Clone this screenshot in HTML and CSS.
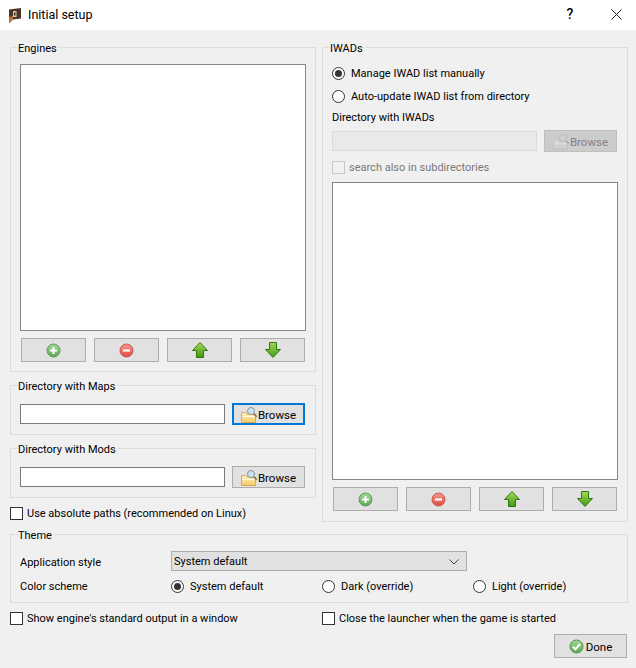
FILE: index.html
```html
<!DOCTYPE html>
<html lang="en">
<head>
    <meta charset="UTF-8">
    <meta name="viewport" content="width=device-width, initial-scale=1.0">
    <title>Initial setup</title>
    <link rel="stylesheet" href="styles.css">
</head>
<body>
    <svg class="icon-defs" width="0" height="0" aria-hidden="true">
        <defs>
            <linearGradient id="greenBall" x1="0" y1="0" x2="0" y2="1">
                <stop offset="0" stop-color="#a6d79c"/>
                <stop offset="1" stop-color="#5aa950"/>
            </linearGradient>
            <linearGradient id="redBall" x1="0" y1="0" x2="0" y2="1">
                <stop offset="0" stop-color="#f59a90"/>
                <stop offset="1" stop-color="#de4a3f"/>
            </linearGradient>
            <linearGradient id="greenArrow" x1="0" y1="0" x2="0" y2="1">
                <stop offset="0" stop-color="#a5d85a"/>
                <stop offset="1" stop-color="#3f9a12"/>
            </linearGradient>
            <linearGradient id="folderFill" x1="0" y1="0" x2="0" y2="1">
                <stop offset="0" stop-color="#fff4c4"/>
                <stop offset="1" stop-color="#f5c964"/>
            </linearGradient>
            <symbol id="icon-add" viewBox="0 0 15 15">
                <circle cx="7.500" cy="7.500" r="6.500" fill="url(#greenBall)" stroke="#5f9f58"/>
                <path d="M7.500 4v7M4 7.500h7" stroke="#fff" stroke-width="2.200"/>
            </symbol>
            <symbol id="icon-remove" viewBox="0 0 15 15">
                <circle cx="7.500" cy="7.500" r="6.500" fill="url(#redBall)" stroke="#c9574e"/>
                <path d="M4 7.500h7" stroke="#fff" stroke-width="2.200"/>
            </symbol>
            <symbol id="icon-up" viewBox="0 0 16 16">
                <path d="M8 .5 15.500 8.500H11.500V15.500H4.500V8.500H.5Z" fill="url(#greenArrow)" stroke="#2f7a0c"/>
            </symbol>
            <symbol id="icon-down" viewBox="0 0 16 16">
                <path d="M8 15.500 15.500 7.500H11.500V.5H4.500V7.500H.5Z" fill="url(#greenArrow)" stroke="#2f7a0c"/>
            </symbol>
            <symbol id="icon-browse" viewBox="0 0 17 16">
                <path d="M.5 5.500h4l1.500 1.500h8.500v8.500H.5Z" fill="url(#folderFill)" stroke="#d6ab50"/>
                <path d="M1 9.500h13" stroke="#fff9dc"/>
                <path d="M12.700 6.700 15.800 9.800" stroke="#8f7248" stroke-width="1.600"/>
                <circle cx="10" cy="4" r="3.500" fill="#cfe2f4" stroke="#8296aa"/>
            </symbol>
            <symbol id="icon-done" viewBox="0 0 15 15">
                <circle cx="7.500" cy="7.500" r="6.500" fill="url(#greenBall)" stroke="#4f9a48"/>
                <path d="M4 7.700 6.500 10.200 11 5" fill="none" stroke="#fff" stroke-width="2"/>
            </symbol>
        </defs>
    </svg>

    <div class="window">
        <div class="titlebar">
            <svg class="app-icon" viewBox="0 0 12 15">
                <path d="M0 1.500 12 0V10.500L4 11.500 0 15Z" fill="#4a3526"/>
                <path d="M0 9 4 8V11.500L0 15Z" fill="#b8752e"/>
                <path d="M4 3h3.500v6H4Z" fill="#d9c9a8"/>
                <path d="M5 4.500h1.500v3H5Z" fill="#3a2a20"/>
            </svg>
            <span class="window-title">Initial setup</span>
            <span class="help-button">?</span>
            <svg class="close-button" viewBox="0 0 11 11">
                <path d="M.5 .5 10.500 10.500M10.500 .5 .5 10.500" stroke="#1a1a1a" fill="none"/>
            </svg>
        </div>

        <div class="content">
            <div class="columns">
                <div class="left-column">
                    <fieldset class="group">
                        <legend>Engines</legend>
                        <div class="list engines-list"></div>
                        <div class="list-buttons">
                            <button class="tool-button"><svg class="icon"><use href="#icon-add"/></svg></button>
                            <button class="tool-button"><svg class="icon"><use href="#icon-remove"/></svg></button>
                            <button class="tool-button"><svg class="arrow"><use href="#icon-up"/></svg></button>
                            <button class="tool-button"><svg class="arrow"><use href="#icon-down"/></svg></button>
                        </div>
                    </fieldset>
                    <fieldset class="group dir-group">
                        <legend>Directory with Maps</legend>
                        <div class="dir-row">
                            <input type="text" class="text-input">
                            <button class="browse-button focused"><svg class="browse-icon"><use href="#icon-browse"/></svg>Browse</button>
                        </div>
                    </fieldset>
                    <fieldset class="group dir-group">
                        <legend>Directory with Mods</legend>
                        <div class="dir-row">
                            <input type="text" class="text-input">
                            <button class="browse-button"><svg class="browse-icon"><use href="#icon-browse"/></svg>Browse</button>
                        </div>
                    </fieldset>
                    <label class="check absolute-paths"><input type="checkbox">Use absolute paths (recommended on Linux)</label>
                </div>

                <fieldset class="group iwads">
                    <legend>IWADs</legend>
                    <label class="check radio-row"><input type="radio" name="iwad" checked>Manage IWAD list manually</label>
                    <label class="check radio-row second"><input type="radio" name="iwad">Auto-update IWAD list from directory</label>
                    <div class="plain-label">Directory with IWADs</div>
                    <div class="dir-row">
                        <input type="text" class="text-input" disabled>
                        <button class="browse-button" disabled><svg class="browse-icon faded"><use href="#icon-browse"/></svg>Browse</button>
                    </div>
                    <label class="check subdirs disabled"><input type="checkbox" disabled>search also in subdirectories</label>
                    <div class="list iwad-list"></div>
                    <div class="list-buttons">
                        <button class="tool-button"><svg class="icon"><use href="#icon-add"/></svg></button>
                        <button class="tool-button"><svg class="icon"><use href="#icon-remove"/></svg></button>
                        <button class="tool-button"><svg class="arrow"><use href="#icon-up"/></svg></button>
                        <button class="tool-button"><svg class="arrow"><use href="#icon-down"/></svg></button>
                    </div>
                </fieldset>
            </div>

            <fieldset class="group theme">
                <legend>Theme</legend>
                <div class="theme-grid">
                    <div class="style-label">Application style</div>
                    <div class="combo">System default
                        <svg class="combo-arrow" viewBox="0 0 10 6"><path d="M.5 .5 5 5 9.500 .5" fill="none" stroke="#444"/></svg>
                    </div>
                    <div>Color scheme</div>
                    <label class="check"><input type="radio" name="scheme" checked>System default</label>
                    <label class="check"><input type="radio" name="scheme">Dark (override)</label>
                    <label class="check"><input type="radio" name="scheme">Light (override)</label>
                </div>
            </fieldset>

            <div class="bottom-checks">
                <label class="check"><input type="checkbox">Show engine's standard output in a window</label>
                <label class="check"><input type="checkbox">Close the launcher when the game is started</label>
            </div>

            <div class="footer">
                <button class="done-button"><svg class="icon"><use href="#icon-done"/></svg>Done</button>
            </div>
        </div>
    </div>
</body>
</html>
```

FILE: styles.css
```css
* {
    box-sizing: border-box;
}
body {
    margin: 0;
    background-color: #f0f0f0;
    color: #000;
    font-family: Roboto, sans-serif;
    font-size: 11px;
    line-height: 14px;
}
.icon-defs {
    position: absolute;
}
.window {
    width: 636px;
    height: 668px;
    overflow: hidden;
}
.titlebar {
    height: 30px;
    background: #fff;
    display: flex;
    align-items: center;
    padding-left: 9px;
}
.app-icon {
    width: 12px;
    height: 15px;
}
.window-title {
    margin-left: 7px;
    font-size: 12.500px;
}
.help-button {
    margin-left: auto;
    margin-bottom: 2px;
    font-size: 14px;
    font-weight: 500;
    width: 10px;
    text-align: center;
}
.close-button {
    width: 11px;
    height: 11px;
    margin-left: 36px;
    margin-right: 14px;
    margin-bottom: 2px;
}
.content {
    padding: 10px 8px 0 10px;
}
.columns {
    display: grid;
    grid-template-columns: 306px 306px;
    gap: 6px;
}
.left-column {
    display: flex;
    flex-direction: column;
    gap: 6px;
}
.group {
    margin: 0;
    padding: 10px 9px 9px;
    border: 1px solid #dcdcdc;
    min-width: 0;
}
.group legend {
    padding: 0 2px 0 0;
    margin-left: -2px;
    height: 14px;
    line-height: 17px;
}
.dir-group {
    padding-top: 11px;
}
.iwads {
    padding-bottom: 10px;
}
.list {
    background: #fff;
    border: 1px solid #828790;
}
.engines-list {
    height: 267px;
}
.iwad-list {
    height: 298px;
    margin-top: 8px;
}
.list-buttons {
    display: flex;
    gap: 8px;
    padding: 7px 1px 0;
}
button {
    font: inherit;
    color: #000;
    background: #e1e1e1;
    border: 1px solid #adadad;
    padding: 0;
    display: flex;
    align-items: center;
    justify-content: center;
}
.tool-button {
    width: 65px;
    height: 24px;
}
.icon {
    width: 15px;
    height: 15px;
}
.arrow {
    width: 16px;
    height: 16px;
}
.dir-row {
    display: flex;
    align-items: center;
    justify-content: space-between;
    padding-right: 1px;
    height: 22px;
}
.text-input {
    width: 205px;
    height: 20px;
    border: 1px solid #7a7a7a;
    background: #fff;
    margin: 0;
    padding: 0;
}
.text-input:disabled {
    background: #e9e9e9;
    border-color: #dadada;
}
.browse-button {
    width: 73px;
    height: 22px;
    padding-top: 2px;
    font-size: 11.500px;
}
.browse-button.focused {
    border: 2px solid #0078d7;
}
.browse-button:disabled {
    background: #ccc;
    border-color: #bfbfbf;
    color: #838383;
}
.browse-icon {
    width: 17px;
    height: 16px;
}
.browse-icon.faded {
    opacity: 0.35;
    filter: grayscale(1);
}
.check {
    display: flex;
    align-items: center;
    gap: 4px;
    height: 13px;
}
.check input {
    appearance: none;
    width: 13px;
    height: 13px;
    margin: 0;
    flex: none;
    background: #fff;
    border: 1px solid #333;
}
.check input[type="radio"] {
    border-radius: 50%;
    margin-right: 2px;
    display: flex;
    align-items: center;
    justify-content: center;
}
.check input[type="radio"]:checked::before {
    content: "";
    width: 7px;
    height: 7px;
    border-radius: 50%;
    background: #333;
}
.check input:disabled {
    border-color: #c8c8c8;
    background: #f0f0f0;
}
.check.disabled {
    color: #787878;
}
.absolute-paths {
    margin-top: 3px;
}
.radio-row {
    margin-top: 3px;
}
.radio-row.second {
    margin-top: 10px;
}
.plain-label {
    margin-top: 8px;
    margin-bottom: 5px;
}
.subdirs {
    margin-top: 9px;
}
.theme {
    margin-top: 5px;
    padding-top: 10px;
    padding-bottom: 5px;
}
.theme-grid {
    display: grid;
    grid-template-columns: 151px 151px 151px 151px;
    grid-template-rows: 20px 21px;
    row-gap: 5px;
    align-items: center;
}
.style-label {
    padding-top: 3px;
}
.combo {
    grid-column: 2 / 5;
    width: 296px;
    height: 20px;
    background: #e1e1e1;
    border: 1px solid #adadad;
    padding: 2px 7px 0 2px;
    display: flex;
    align-items: center;
    justify-content: space-between;
}
.combo-arrow {
    width: 10px;
    height: 6px;
}
.bottom-checks {
    display: grid;
    grid-template-columns: 312px 1fr;
    margin-top: 9px;
}
.footer {
    display: flex;
    justify-content: flex-end;
    margin-top: 9px;
    padding-right: 1px;
}
.done-button {
    width: 73px;
    height: 24px;
    gap: 2px;
    font-size: 11.500px;
    padding-top: 1px;
}
```
